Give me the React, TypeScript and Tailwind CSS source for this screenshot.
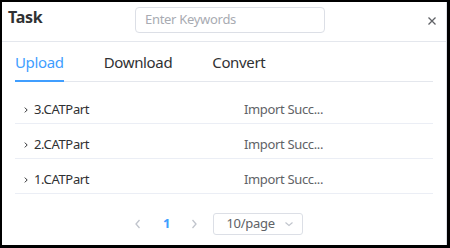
import React from "react";

const font = { fontFamily: '"Noto Sans", "Open Sans", Arial, sans-serif' };

function Chevron() {
  return (
    <svg width="8" height="8" viewBox="0 0 8 8" className="shrink-0">
      <path d="M2.8 1.6 L5.2 4 L2.8 6.4" fill="none" stroke="#303133" strokeWidth="1" />
    </svg>
  );
}

const rows = ["3.CATPart", "2.CATPart", "1.CATPart"];

export default function App() {
  return (
    <div className="w-[450px] h-[248px] bg-black pt-[2px] pl-[2px] pr-[3px] pb-[3px]" style={font}>
      <div className="w-full h-full bg-white flex flex-col border-r border-[#dcdfe6]">
        {/* header */}
        <div className="h-[40px] shrink-0 flex items-start border-b border-[#e4e7ed] relative">
          <div className="ml-[6px] mt-[4px] text-[16px] font-bold text-[#303133] leading-[22px] tracking-[-0.3px]">Task</div>
          <div className="absolute left-[133px] top-[5px] w-[190px] h-[26px] border border-[#dcdfe6] rounded-[4px] flex items-center pl-[9px] text-[13px] text-[#a8abb2] tracking-[-0.3px]">
            Enter Keywords
          </div>
          <svg className="absolute left-[425px] top-[14px]" width="10" height="10" viewBox="0 0 10 10">
            <path d="M1.5 1.5 L8.5 8.5 M8.5 1.5 L1.5 8.5" stroke="#606266" strokeWidth="1.3" />
          </svg>
        </div>
        {/* tabs */}
        <div className="mx-[13px] flex flex-col">
          <div className="h-[40px] flex items-stretch border-b border-[#e4e7ed] tracking-[-0.35px]">
            <div className="relative flex items-center pr-[20px] pt-[2px] text-[15px] text-[#409eff]">
              Upload
              <div className="absolute left-0 right-[20px] bottom-[-1px] h-[2px] bg-[#409eff]" />
            </div>
            <div className="flex items-center px-[20px] pt-[2px] text-[15px] text-[#303133]">Download</div>
            <div className="flex items-center px-[20px] pt-[2px] text-[15px] text-[#303133]">Convert</div>
          </div>
          <div className="mt-[7px] flex flex-col">
            {rows.map((r) => (
              <div key={r} className="h-[35px] flex items-center pt-[8px] border-b border-[#ebeef5] text-[13px] tracking-[-0.35px]">
                <div className="w-[229px] flex items-center pl-[7px] gap-[4px] text-[#303133]">
                  <Chevron />
                  <span>{r}</span>
                </div>
                <span className="text-[#606266]">Import Succ...</span>
              </div>
            ))}
          </div>
          <div className="mt-[19px] flex items-center ml-[118px]">
            <svg width="10" height="12" viewBox="0 0 10 12" className="mr-[20px]">
              <path d="M6.5 2 L3 6 L6.5 10" fill="none" stroke="#c0c4cc" strokeWidth="1.3" />
            </svg>
            <span className="text-[13px] font-bold text-[#409eff] mr-[19px]">1</span>
            <svg width="10" height="12" viewBox="0 0 10 12" className="mr-[14px]">
              <path d="M3.5 2 L7 6 L3.5 10" fill="none" stroke="#c0c4cc" strokeWidth="1.3" />
            </svg>
            <div className="w-[90px] h-[22px] border border-[#dcdfe6] rounded-[3px] flex items-center pl-[12px] pr-[8px] text-[13px] text-[#606266] tracking-[-0.3px]">
              <span className="flex-1">10/page</span>
              <svg width="10" height="8" viewBox="0 0 10 8">
                <path d="M1.5 2.5 L5 5.5 L8.5 2.5" fill="none" stroke="#c0c4cc" strokeWidth="1.1" />
              </svg>
            </div>
          </div>
        </div>
      </div>
    </div>
  );
}
